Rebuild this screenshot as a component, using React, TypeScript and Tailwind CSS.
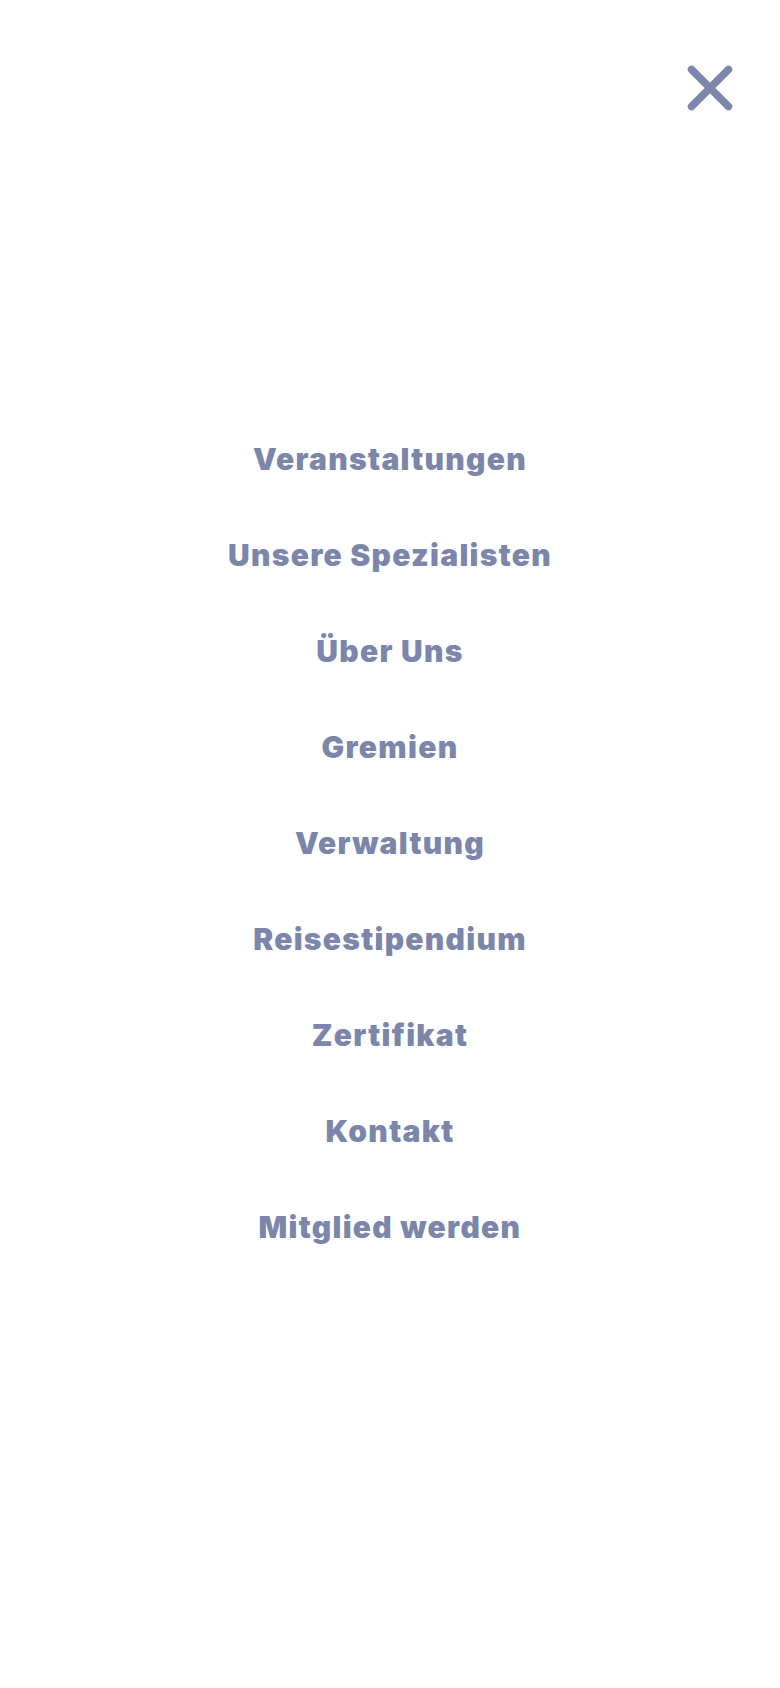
const links = [
  'Veranstaltungen',
  'Unsere Spezialisten',
  'Über Uns',
  'Gremien',
  'Verwaltung',
  'Reisestipendium',
  'Zertifikat',
  'Kontakt',
  'Mitglied werden',
];

// Close icon: two rounded strokes
function CloseIcon() {
  return (
    <svg width="48" height="48" viewBox="0 0 48 48" fill="none">
      <path
        d="M5.5 5.5L42.5 42.5M42.5 5.5L5.5 42.5"
        stroke="currentColor"
        strokeWidth="7.5"
        strokeLinecap="round"
      />
    </svg>
  );
}

export default function App() {
  return (
    <div className="min-h-[1688px] w-full bg-white font-['Inter',sans-serif] text-[#7c86aa]">
      {/* close button */}
      <div className="flex justify-end pt-[64px] pr-[46px]">
        <button aria-label="Menü schließen" className="block">
          <CloseIcon />
        </button>
      </div>

      {/* menu links */}
      <nav className="mt-[327px] flex flex-col items-center gap-[56px]">
        {links.map((label) => (
          <a
            key={label}
            href="#"
            className="text-[30px] leading-[40px] font-black tracking-[1.3px]"
          >
            {label}
          </a>
        ))}
      </nav>
    </div>
  );
}
